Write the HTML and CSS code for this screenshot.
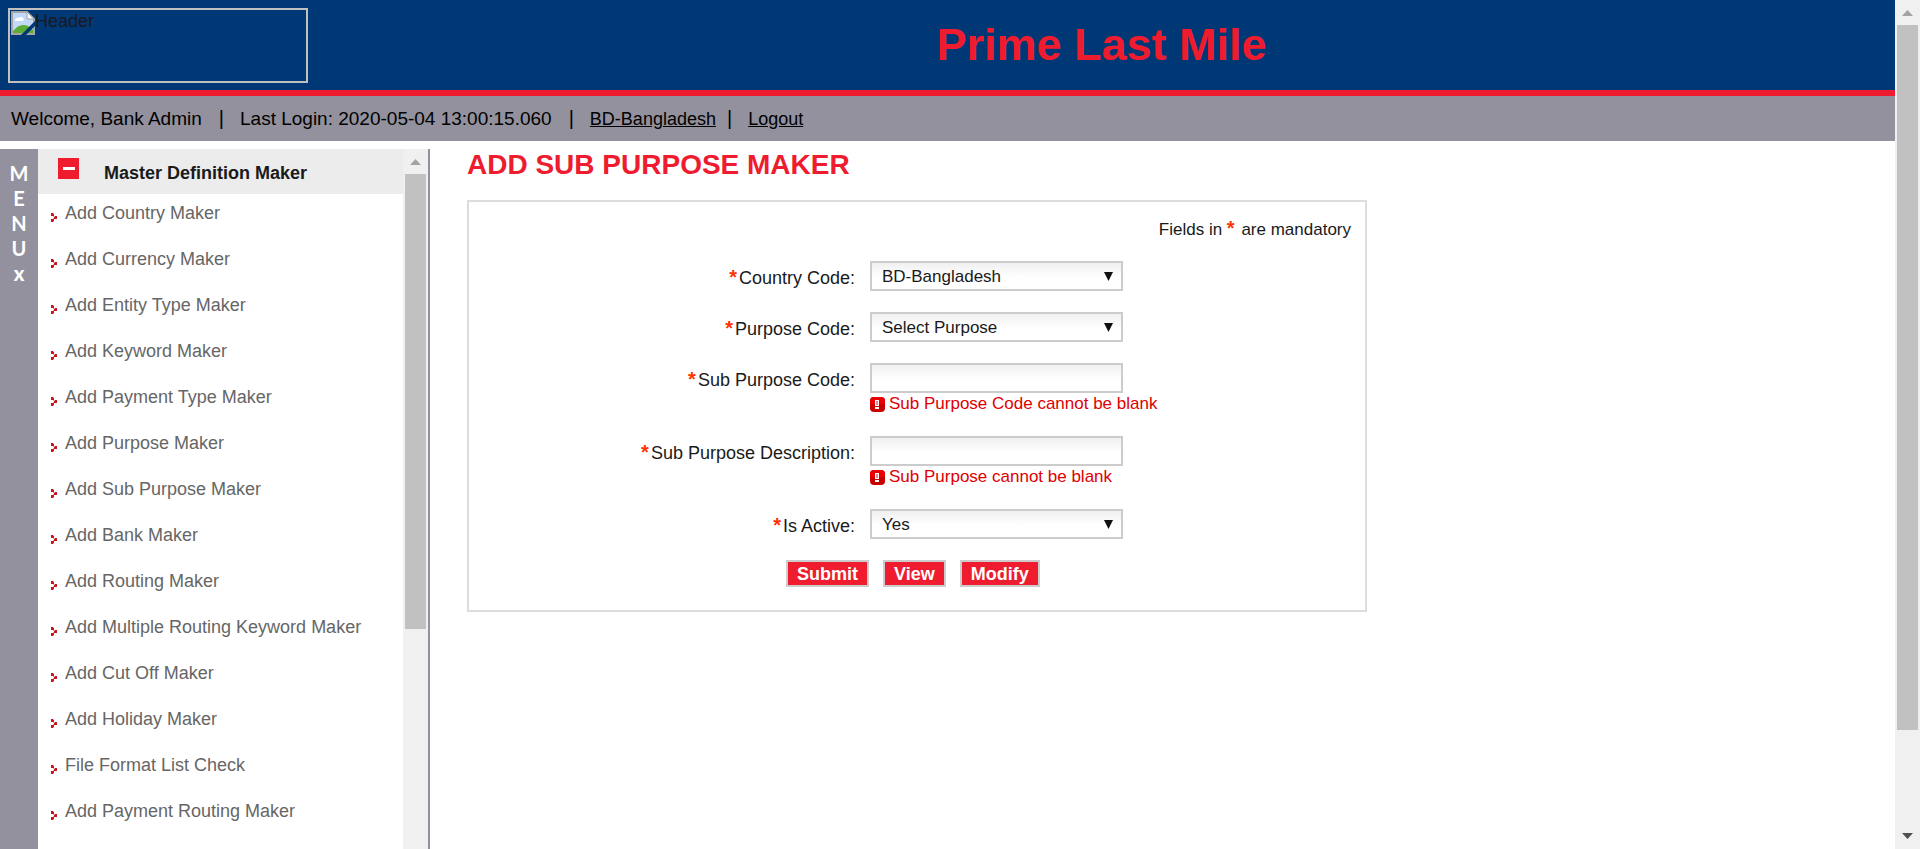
FILE: index.html
```html
<!DOCTYPE html>
<html lang="en">
<head>
<meta charset="utf-8">
<title>Prime Last Mile</title>
<link rel="stylesheet" href="styles.css">
</head>
<body>
<svg class="defs" aria-hidden="true">
  <symbol id="bullet" viewBox="0 0 6 9" shape-rendering="crispEdges"><path fill="#c4161c" d="M0 0h3v3h-3zM3 3h3v3h-3zM0 6h3v3h-3z"/><path fill="#e9a0a0" d="M2 0h1v1h-1zM3 3h1v1h-1zM2 8h1v1h-1zM2 3h1v1h-1zM2 5h1v1h-1z"/></symbol>
  <symbol id="alert" viewBox="0 0 15 15"><rect width="15" height="15" rx="4" fill="#c80000"/><path d="M4 0h7a4 4 0 0 1 4 4v3H0V4a4 4 0 0 1 4-4z" fill="#ea0000"/><path fill="#fff" d="M5 3h4v6H5zM5 10h4v2H5z"/><path fill="#e88" d="M6 4h2v4H6z"/></symbol>
  <symbol id="up" viewBox="0 0 11 6"><path d="M0 6 5.500 0 11 6z"/></symbol>
</svg>
<div class="app">
  <div class="page">
    <header class="banner">
      <div class="logo">
        <svg class="broken" viewBox="0 0 24 24" aria-hidden="true"><path fill="#c3d9f7" stroke="#a5a5a5" stroke-width="2" d="M1 1H16L23 8V23H1Z"/><path fill="#fff" d="M4 9a3 3 0 0 1 4-2 2.500 2.500 0 0 1 4 3H4Z"/><path fill="#5bae33" d="M2 22v-2q5-6 10-6q6 0 10 5v3Z"/><path fill="#f6f6f6" stroke="#a5a5a5" d="M16 1v7h7z"/><path fill="#003876" d="M24 10v5L15 24H10Z"/></svg><span>Header</span>
      </div>
      <h1 class="brand">Prime Last Mile</h1>
    </header>
    <div class="userbar">
      <span class="info">Welcome, Bank Admin</span><span class="bar">|</span><span class="info">Last Login: 2020-05-04 13:00:15.060</span><span class="bar">|</span><a href="#">BD-Bangladesh</a><span class="bar">|</span><a href="#">Logout</a>
    </div>
    <div class="body">
      <aside class="sidebar">
        <button class="menu-tab" type="button" aria-label="Close menu"><span>M</span><span>E</span><span>N</span><span>U</span><b>x</b></button>
        <nav class="menu">
          <button class="menu-head" type="button"><span class="minus"></span>Master Definition Maker</button>
          <ul class="menu-list">
            <li><svg><use href="#bullet"/></svg><a href="#">Add Country Maker</a></li>
            <li><svg><use href="#bullet"/></svg><a href="#">Add Currency Maker</a></li>
            <li><svg><use href="#bullet"/></svg><a href="#">Add Entity Type Maker</a></li>
            <li><svg><use href="#bullet"/></svg><a href="#">Add Keyword Maker</a></li>
            <li><svg><use href="#bullet"/></svg><a href="#">Add Payment Type Maker</a></li>
            <li><svg><use href="#bullet"/></svg><a href="#">Add Purpose Maker</a></li>
            <li><svg><use href="#bullet"/></svg><a href="#">Add Sub Purpose Maker</a></li>
            <li><svg><use href="#bullet"/></svg><a href="#">Add Bank Maker</a></li>
            <li><svg><use href="#bullet"/></svg><a href="#">Add Routing Maker</a></li>
            <li><svg><use href="#bullet"/></svg><a href="#">Add Multiple Routing Keyword Maker</a></li>
            <li><svg><use href="#bullet"/></svg><a href="#">Add Cut Off Maker</a></li>
            <li><svg><use href="#bullet"/></svg><a href="#">Add Holiday Maker</a></li>
            <li><svg><use href="#bullet"/></svg><a href="#">File Format List Check</a></li>
            <li><svg><use href="#bullet"/></svg><a href="#">Add Payment Routing Maker</a></li>
          </ul>
        </nav>
        <div class="scroll scroll-menu" aria-hidden="true"><svg class="arrow"><use href="#up"/></svg><div class="thumb"></div></div>
      </aside>
      <main class="content">
        <h2 class="title">ADD SUB PURPOSE MAKER</h2>
        <form class="panel">
          <p class="note">Fields in <span class="star">*</span> are mandatory</p>
          <div class="row">
            <label for="country"><span class="star">*</span>Country Code:</label>
            <div class="field"><select id="country"><option>BD-Bangladesh</option></select></div>
          </div>
          <div class="row">
            <label for="purpose"><span class="star">*</span>Purpose Code:</label>
            <div class="field"><select id="purpose"><option>Select Purpose</option></select></div>
          </div>
          <div class="row">
            <label for="subcode"><span class="star">*</span>Sub Purpose Code:</label>
            <div class="field"><input id="subcode" type="text"><p class="error"><svg><use href="#alert"/></svg>Sub Purpose Code cannot be blank</p></div>
          </div>
          <div class="row">
            <label for="subdesc"><span class="star">*</span>Sub Purpose Description:</label>
            <div class="field"><input id="subdesc" type="text"><p class="error"><svg><use href="#alert"/></svg>Sub Purpose cannot be blank</p></div>
          </div>
          <div class="row">
            <label for="active"><span class="star">*</span>Is Active:</label>
            <div class="field"><select id="active"><option>Yes</option></select></div>
          </div>
          <div class="actions"><button type="submit">Submit</button><button type="button">View</button><button type="button">Modify</button></div>
        </form>
      </main>
    </div>
  </div>
  <div class="scroll scroll-page" aria-hidden="true"><svg class="arrow"><use href="#up"/></svg><div class="thumb"></div><svg class="arrow arrow-down"><use href="#up"/></svg></div>
</div>
</body>
</html>
```
FILE: styles.css
```css
* { box-sizing: border-box; }
body {
  margin: 0;
  font-family: "Liberation Sans", Arial, sans-serif;
  color: #1a1a1a;
  background: #fff;
}
h1, h2, p, ul { margin: 0; padding: 0; }
button { font: inherit; border: 0; padding: 0; cursor: pointer; }
.defs { position: absolute; width: 0; height: 0; }
.app { display: flex; height: 100vh; overflow: hidden; }
.page { flex: 1; min-width: 0; display: flex; flex-direction: column; }

.banner {
  display: flex;
  align-items: flex-start;
  flex: none;
  height: 96px;
  padding: 8px 0 0 8px;
  background: #003876;
  border-bottom: 6px solid #ee1c2e;
}
.logo {
  display: flex;
  align-items: flex-start;
  width: 300px;
  height: 75px;
  padding: 1px;
  border: 2px solid #c0c0c0;
  font-size: 18px;
  line-height: 20px;
}
.broken { width: 24px; height: 24px; }
.brand {
  flex: 1;
  text-align: center;
  font-size: 45px;
  line-height: 74px;
  color: #ee1c2e;
}
.userbar {
  display: flex;
  flex: none;
  align-items: baseline;
  height: 45px;
  padding: 0 11px;
  background: #92919d;
  color: #000;
  font-size: 20px;
  line-height: 44px;
}
.userbar a { color: #000; font-size: 18px; }
.info { padding-right: 6px; font-size: 19px; }
.bar { padding: 0 16px 0 11px; }

.body { display: flex; flex: 1; min-height: 0; padding-top: 8px; }
.sidebar { display: flex; flex: none; width: 430px; border-right: 2px solid #92919d; overflow: hidden; }
.menu-tab {
  display: flex;
  flex: none;
  flex-direction: column;
  align-items: center;
  justify-content: flex-start;
  width: 38px;
  padding-top: 12px;
  background: #92919d;
  color: #fff;
  font: bold 20px/25px Lato, sans-serif;
}
.menu { flex: 1; min-width: 0; }
.menu-head {
  display: flex;
  width: 100%;
  height: 45px;
  padding: 9px 20px;
  gap: 25px;
  background: #ececec;
  color: #1a1a1a;
  font-weight: bold;
  font-size: 18px;
  line-height: 30px;
}
.minus {
  width: 21px;
  height: 21px;
  background: linear-gradient(#fff, #fff) center / 12px 3px no-repeat #ee1c2e;
}
.menu-list { list-style: none; }
.menu-list li { display: flex; align-items: center; height: 46px; padding: 0 13px 8px; gap: 8px; font-size: 18px; }
.menu-list svg { width: 6px; height: 9px; margin-top: 9px; }
.menu-list a { color: #666; text-decoration: none; }

.scroll { display: flex; flex: none; flex-direction: column; align-items: center; width: 25px; background: #f0f0f0; }
.arrow { flex: none; width: 11px; height: 6px; margin: 10px 0 9px; fill: #a3a3a3; }
.arrow-down { margin: auto 0 10px; fill: #505050; transform: rotate(180deg); }
.thumb { width: 21px; background: #c1c1c1; }
.scroll-menu .thumb { height: 65%; }
.scroll-page .thumb { height: 83%; }

.content { flex: 1; min-width: 0; padding: 0 37px; }
.title { font-size: 28px; line-height: 32px; color: #ee1c2e; }
.panel {
  max-width: 900px;
  margin-top: 19px;
  padding: 18px 14px 23px;
  border: 2px solid #ddd;
}
.note { text-align: right; font-size: 17px; line-height: 20px; margin-bottom: 21px; }
.star { margin-right: 2px; color: #ff3300; font-weight: bold; font-size: 20px; line-height: 16px; }
.row { display: grid; grid-template-columns: 372px 1fr; column-gap: 15px; margin-bottom: 21px; }
.row label { padding-top: 4px; text-align: right; font-size: 18px; line-height: 26px; }
.field select, .field input {
  display: block;
  width: 253px;
  height: 30px;
  padding: 0 10px;
  border: 2px solid #ccc;
  border-radius: 0;
  background: linear-gradient(#f0f0f0, #fff 14px);
  font: 17px "Liberation Sans", Arial, sans-serif;
  color: #1a1a1a;
}
.field select {
  appearance: none;
  background:
    url("data:image/svg+xml,%3Csvg xmlns='http://www.w3.org/2000/svg' width='9' height='9'%3E%3Cpath d='M0 0h9L4.500 9z' fill='%23111'/%3E%3C/svg%3E") right 8px center no-repeat,
    linear-gradient(#f0f0f0, #fff 14px);
}
.error { display: flex; align-items: center; gap: 4px; height: 22px; font-size: 17px; color: #d00; }
.error svg { width: 15px; height: 15px; }
.actions { display: flex; gap: 14px; padding-left: 303px; }
.actions button {
  height: 27px;
  padding: 0 9px;
  border: 2px solid #ccc;
  background: #ee1c2e;
  color: #fff;
  font-size: 18px;
  font-weight: bold;
  line-height: 22px;
}
```
